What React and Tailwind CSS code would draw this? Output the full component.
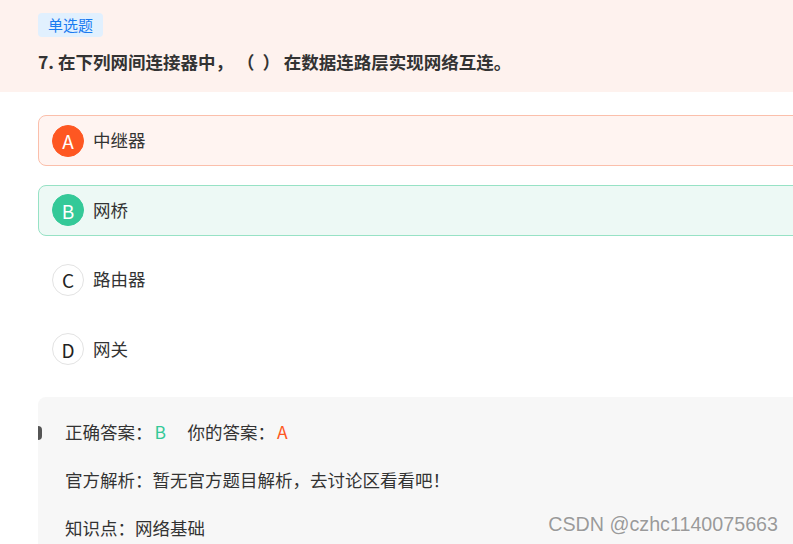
import React from "react";

const FONT = { fontFamily: '"Microsoft YaHei", "Noto Sans CJK SC", "Noto Sans", sans-serif' };

const OPTIONS = [
  { key: "A", text: "中继器", state: "wrong" },
  { key: "B", text: "网桥", state: "right" },
  { key: "C", text: "路由器", state: "none" },
  { key: "D", text: "网关", state: "none" },
];

const BOX = {
  wrong: "border-[#fbbfab] bg-[#fff4f1]",
  right: "border-[#97e2c5] bg-[#edf9f5]",
  none: "border-transparent bg-white",
};

const DOT = {
  wrong: "bg-[#fe5722] text-white border-[#fe5722]",
  right: "bg-[#34c998] text-white border-[#34c998]",
  none: "bg-white text-[#222] border-[#e3e3e3]",
};

function Option({ opt }) {
  return (
    <div
      className={`flex items-center h-[51px] pl-[13px] border rounded-lg mr-[-20px] ${BOX[opt.state]}`}
    >
      <div
        className={`w-8 h-8 rounded-full border flex items-center justify-center text-[19px] leading-none ${DOT[opt.state]}`}
      >
        {opt.key}
      </div>
      <span className="ml-[9px] text-[17.5px] text-[#333]">{opt.text}</span>
    </div>
  );
}

export default function App() {
  return (
    <div
      className="relative w-[793px] h-[544px] overflow-hidden bg-white [text-spacing-trim:space-all]"
      style={FONT}
    >
      {/* question header */}
      <div className="h-[92px] bg-[#fef2ee] pl-[38px] pt-[12px]">
        <span className="inline-flex items-center h-6 px-[10px] rounded bg-[#e1f0fe] text-[#1a7bf0] text-[15px]">
          单选题
        </span>
        <p className="mt-[12px] text-[17.5px] font-bold text-[#333] whitespace-pre">
          {"7. 在下列网间连接器中， （  ） 在数据连路层实现网络互连。"}
        </p>
      </div>

      {/* options */}
      <div className="pl-[38px] pt-[23px] flex flex-col gap-[18.5px]">
        {OPTIONS.map((o) => (
          <Option key={o.key} opt={o} />
        ))}
      </div>

      {/* answer panel */}
      <div className="relative ml-[38px] mt-[22px] bg-[#f7f7f7] rounded-tl-lg pt-[12px] pl-[27px] text-[17.5px] text-[#333] h-[200px]">
        <div className="absolute left-0 top-[29px] w-[4px] h-[14px] rounded-r-full bg-[#555]" />
        <div className="h-12 flex items-center">
          正确答案：<span className="text-[#34c998] ml-[2px] w-[33px]">B</span>你的答案：
          <span className="text-[#fe5722] ml-[2px]">A</span>
        </div>
        <div className="h-12 flex items-center">
          官方解析：暂无官方题目解析，去讨论区看看吧！
        </div>
        <div className="h-12 flex items-center">知识点：网络基础</div>
      </div>

      {/* watermark */}
      <div
        className="absolute right-[15px] bottom-[4px] text-[19.7px] text-[#9a9a9a] whitespace-nowrap [text-shadow:0_0_2px_#fff]"
        style={{ fontFamily: '"Liberation Sans", Arial, sans-serif' }}
      >
        CSDN @czhc1140075663
      </div>
    </div>
  );
}
